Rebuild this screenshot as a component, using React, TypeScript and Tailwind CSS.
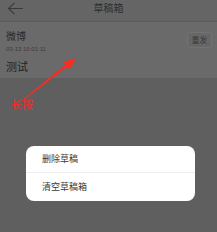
export default function App() {
  return (
    <div
      className="relative w-[217px] h-[232px] overflow-hidden bg-[#5f5f5f]"
      style={{ fontFamily: '"Noto Sans CJK SC", "Noto Sans", sans-serif' }}
    >
      {/* header */}
      <div className="relative flex h-[22px] items-center justify-center border-b border-[#5a5a5a] bg-[#656565]">
        <svg
          className="absolute left-[7px] top-[2px]"
          width="17"
          height="13"
          viewBox="0 0 17 13"
          fill="none"
          stroke="#3a3a3a"
          strokeWidth="1.1"
        >
          <path d="M16 6.5H1.5M7.5 0.8L1.5 6.5l6 5.7" />
        </svg>
        <span className="text-[10px] leading-none text-[#2e2e2e] -mt-[6px]">草稿箱</span>
      </div>

      {/* draft item */}
      <div className="flex h-[56px] items-start justify-between bg-[#6a6a6a] pl-[6px] pr-[5px]">
        <div className="flex flex-col">
          <span className="mt-[8px] text-[10px] leading-[12px] text-[#2a2a2a]">微博</span>
          <span className="mt-[3px] text-[6px] leading-[8px] text-[#3c3c3c]" style={{ fontFamily: '"Liberation Sans", sans-serif' }}>
            03-13 10:01:11
          </span>
          <span className="mt-[7px] text-[11px] leading-[13px] text-[#242424]">测试</span>
        </div>
        <div className="mt-[10px] flex h-[16px] w-[25px] items-center justify-center rounded-[3px] border border-[#727272] bg-[#676767] text-[8px] leading-none text-[#3a3a3a]">
          重发
        </div>
      </div>

      {/* annotation */}
      <svg className="absolute left-0 top-0" width="217" height="232" viewBox="0 0 217 232">
        <polygon points="21.7,100.4 22.3,101.2 67.3,66.6 65.7,64.4" fill="#ff2a1f" />
        <polygon points="76,58 63.5,62 69.5,69.5" fill="#ff2a1f" />
      </svg>
      <span className="absolute left-[11px] top-[98px] text-[11px] leading-[13px] text-[#e8302a]">长按</span>

      {/* action sheet */}
      <div className="absolute left-[26px] top-[146px] flex w-[169px] flex-col overflow-hidden rounded-[8px] bg-white">
        <div className="flex h-[27px] items-center border-b border-[#eeeeee] pl-[16px] text-[9px] text-[#3a3a3a]">
          删除草稿
        </div>
        <div className="flex h-[28px] items-center pl-[16px] text-[9px] text-[#3a3a3a]">清空草稿箱</div>
      </div>
    </div>
  );
}
